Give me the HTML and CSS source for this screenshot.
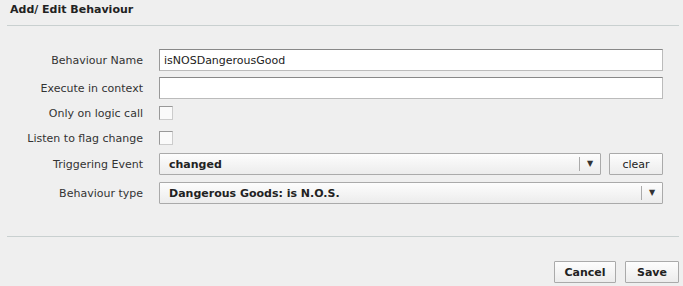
FILE: index.html
```html
<!DOCTYPE html>
<html lang="en">
<head>
  <meta charset="UTF-8" />
  <title>Add/ Edit Behaviour</title>
  <link rel="stylesheet" href="styles.css">
</head>
<body>
  <div class="dialog">
    <div class="title">Add/ Edit Behaviour</div>

    <div class="form">
      <label class="row-label">Behaviour Name</label>
      <div class="row-field"><input type="text" class="text" value="isNOSDangerousGood" /></div>

      <label class="row-label">Execute in context</label>
      <div class="row-field"><input type="text" class="text" value="" /></div>

      <label class="row-label check-row">Only on logic call</label>
      <div class="row-field check-row"><span class="check"></span></div>

      <label class="row-label check-row">Listen to flag change</label>
      <div class="row-field check-row"><span class="check"></span></div>

      <label class="row-label">Triggering Event</label>
      <div class="row-field">
        <div class="combo combo-short">
          <span class="combo-text">changed</span>
          <span class="combo-arrow">&#9660;</span>
        </div>
        <button class="btn btn-clear">clear</button>
      </div>

      <label class="row-label">Behaviour type</label>
      <div class="row-field">
        <div class="combo">
          <span class="combo-text">Dangerous Goods: is N.O.S.</span>
          <span class="combo-arrow">&#9660;</span>
        </div>
      </div>
    </div>

    <div class="footer">
      <button class="btn btn-cancel">Cancel</button>
      <button class="btn btn-save">Save</button>
    </div>
  </div>
</body>
</html>
```

FILE: styles.css
```css
body {
  margin: 0;
  background-color: #efefef;
  font-family: 'DejaVu Sans', Verdana, sans-serif;
  font-size: 11px;
  color: #222;
}
.dialog {
  width: 683px;
  height: 286px;
}
.title {
  font-weight: bold;
  padding: 3px 0 0 3px;
  height: 22px;
  margin: 0 4px 0 7px;
  border-bottom: 1px solid #c9d0d0;
}
.form {
  display: grid;
  grid-template-columns: 143px 1fr;
  grid-template-rows: 28px 28px 25px 23px 29px 29px;
  column-gap: 16px;
  align-items: start;
  margin: 20px 20px 28px 0;
}
.row-label {
  display: flex;
  align-items: center;
  justify-content: flex-end;
  height: 22px;
  margin-top: 3px;
  color: #333;
  white-space: nowrap;
}
.row-field {
  display: flex;
  align-items: center;
  height: 22px;
  margin-top: 3px;
}
.check-row {
  margin-top: 0;
}
.text {
  box-sizing: border-box;
  width: 100%;
  height: 22px;
  margin: 0;
  padding: 0 4px;
  font-family: inherit;
  font-size: 11px;
  color: #222;
  background: #fff;
  border: 1px solid #bbb;
  border-top-color: #888;
  border-left-color: #999;
  outline: none;
}
.check {
  display: block;
  box-sizing: border-box;
  width: 14px;
  height: 14px;
  background: #fafafa;
  border: 1px solid #999;
  border-right-color: #ccc;
  border-bottom-color: #ccc;
}
.combo {
  box-sizing: border-box;
  display: flex;
  align-items: center;
  flex: 1;
  height: 22px;
  border: 1px solid #aaa;
  border-radius: 1px;
  background: linear-gradient(#fdfdfd, #ececec);
  font-weight: bold;
}
.combo-short {
  flex: none;
  width: 442px;
}
.combo-text {
  flex: 1;
  padding-left: 9px;
}
.combo-arrow {
  width: 20px;
  text-align: center;
  font-size: 8px;
  border-left: 1px solid #aaa;
  height: 14px;
  line-height: 14px;
  color: #333;
}
.btn {
  box-sizing: border-box;
  height: 22px;
  padding: 0;
  font-family: inherit;
  font-size: 11px;
  font-weight: bold;
  color: #222;
  background: linear-gradient(#fdfdfd, #ececec);
  border: 1px solid #aaa;
  border-radius: 1px;
}
.btn-clear {
  margin-left: 8px;
  width: 54px;
  font-weight: normal;
}
.btn-cancel {
  width: 62px;
}
.btn-save {
  width: 54px;
}
.footer {
  display: flex;
  justify-content: flex-end;
  gap: 9px;
  margin: 0 4px 0 7px;
  padding-top: 24px;
  border-top: 1px solid #c9d0d0;
}
```
